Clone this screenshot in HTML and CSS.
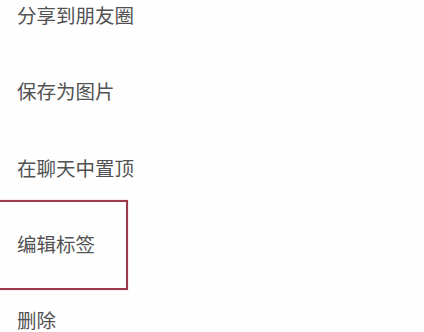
FILE: index.html
```html
<!DOCTYPE html>
<html lang="zh">
<head>
<meta charset="utf-8">
<link rel="stylesheet" href="styles.css">
</head>
<body>
<ul class="menu">
  <li class="item">分享到朋友圈</li>
  <li class="item">保存为图片</li>
  <li class="item">在聊天中置顶</li>
  <li class="item item-marked">编辑标签</li>
  <li class="item item-last">删除</li>
</ul>
</body>
</html>
```
FILE: styles.css
```css
html, body {
  margin: 0;
  padding: 0;
  background: #fefefe;
  overflow: hidden;
}
body {
  width: 424px;
  height: 332px;
  font-family: "Noto Sans CJK SC", "Noto Sans", sans-serif;
}
.menu {
  list-style: none;
  margin: -24px 0 0 0;
  padding: 0;
  display: flex;
  flex-direction: column;
}
.item {
  position: relative;
  height: 76.5px;
  display: flex;
  align-items: center;
  padding-left: 17px;
  font-size: 19.5px;
  line-height: 1.1;
  color: #525252;
}
.item-last {
  height: 23px;
  margin-top: 26.5px;
}
.item-marked::after {
  content: "";
  position: absolute;
  left: -10px;
  top: -6px;
  width: 134px;
  height: 86px;
  border: 2px solid #9c3a4a;
  box-shadow: 0 0 1.5px rgba(200, 60, 80, 0.35);
}
```
